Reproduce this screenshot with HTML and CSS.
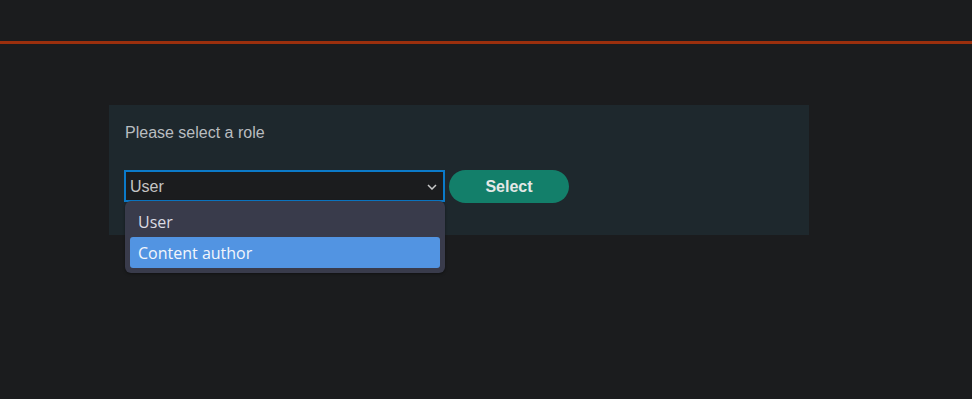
FILE: index.html
```html
<!DOCTYPE html>
<html lang="en">
<head>
  <meta charset="UTF-8">
  <title>Select role</title>
  <link rel="stylesheet" href="styles.css">
</head>
<body>

<div class="topbar"></div>

<div class="role-panel">
  <p class="role-label">Please select a role</p>
  <form class="role-form">
    <div class="select-wrap">
      <div class="select-box">
        <span>User</span>
        <svg width="10" height="6" viewBox="0 0 10 6"><path d="M1 1 L5 5 L9 1" fill="none" stroke="#c8c8c8" stroke-width="1.5"/></svg>
      </div>
      <ul class="select-menu">
        <li>User</li>
        <li class="active">Content author</li>
      </ul>
    </div>
    <button type="submit">Select</button>
  </form>
</div>

</body>
</html>
```

FILE: styles.css
```css
html, body {
  min-height: 100vh;
}

body {
  margin: 0;
  background: #1b1c1e;
  font-family: "Liberation Sans", Arial, sans-serif;
}

.topbar {
  height: 41px;
  border-bottom: 3px solid #9b2f0d;
}

.role-panel {
  width: 668px;
  height: 93px;
  margin: 61px 0 0 109px;
  padding: 19px 16px 18px;
  background: #1e282d;
}

.role-label {
  margin: 0;
  font-size: 16px;
  line-height: 18px;
  color: #b9bdc0;
}

.role-form {
  display: flex;
  margin-top: 28px;
  margin-left: -1px;
}

.select-wrap {
  position: relative;
}

.select-box {
  display: flex;
  align-items: center;
  justify-content: space-between;
  box-sizing: border-box;
  width: 321px;
  height: 32px;
  padding: 1px 6px 0 4px;
  border: 2px solid #0b7ac9;
  background: #1b1c1e;
  color: #c5c5c5;
  font-size: 16px;
}

.select-menu {
  position: absolute;
  top: 31px;
  left: 1px;
  z-index: 2;
  width: 310px;
  margin: 0;
  padding: 5px;
  list-style: none;
  background: #393b4b;
  border-radius: 6px;
  box-shadow: 0 1px 3px rgba(0,0,0,0.4);
  font-family: "Open Sans", "Noto Sans", sans-serif;
  font-size: 16px;
  color: #dcdce4;
}

.select-menu li {
  height: 31px;
  line-height: 32px;
  padding-left: 8px;
  border-radius: 3px;
}

.select-menu li.active {
  background: #5294e2;
  color: #f2f6fc;
}

button {
  width: 120px;
  height: 33px;
  margin-left: 4px;
  border: none;
  border-radius: 17px;
  background: #137f6a;
  color: #e4e8e6;
  font-family: "Liberation Sans", Arial, sans-serif;
  font-size: 16px;
  font-weight: bold;
  cursor: pointer;
}
```
